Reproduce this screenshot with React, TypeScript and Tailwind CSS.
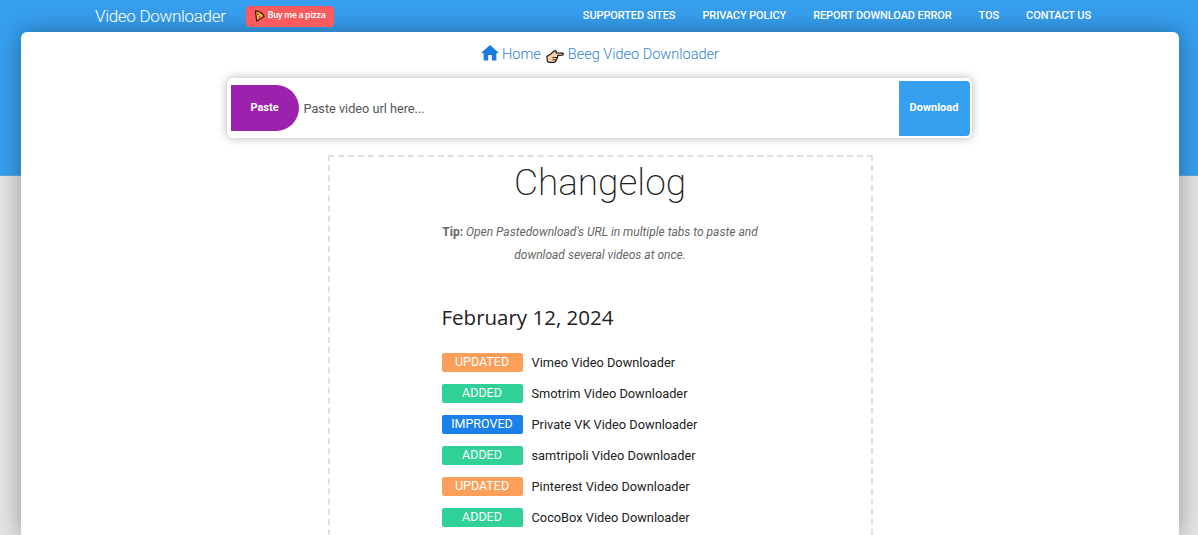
const rows = [
  { tag: "UPDATED", color: "bg-[#fb9f5a]", name: "Vimeo Video Downloader" },
  { tag: "ADDED", color: "bg-[#30d196]", name: "Smotrim Video Downloader" },
  { tag: "IMPROVED", color: "bg-[#1b80e9]", name: "Private VK Video Downloader" },
  { tag: "ADDED", color: "bg-[#30d196]", name: "samtripoli Video Downloader" },
  { tag: "UPDATED", color: "bg-[#fb9f5a]", name: "Pinterest Video Downloader" },
  { tag: "ADDED", color: "bg-[#30d196]", name: "CocoBox Video Downloader" },
];

const navItems = ["Supported Sites", "Privacy Policy", "Report Download Error", "TOS", "Contact Us"];

function Pizza() {
  return (
    <svg width="11" height="12" viewBox="0 0 12 13" className="shrink-0">
      <path d="M1.5 1 C6 1.5 10 4 11 7 L3 12 Z" fill="#f9b24a" stroke="#3a1a10" strokeWidth="1.4" strokeLinejoin="round" />
      <circle cx="4.5" cy="4.5" r="1" fill="#c0321e" />
      <circle cx="6" cy="7.5" r="1" fill="#c0321e" />
    </svg>
  );
}

function HomeIcon() {
  return (
    <svg width="18" height="16" viewBox="0 0 18 16" className="shrink-0">
      <path d="M9 0 L18 8 H15.4 V15.5 H10.8 V10 H7.2 V15.5 H2.6 V8 H0 Z" fill="#1a7be0" />
    </svg>
  );
}

function Hand() {
  return (
    <svg width="18" height="13" viewBox="0 0 18 13" className="shrink-0">
      <path
        d="M0.8 6.5 L4 4.6 L7.8 1.2 C8.6 0.6 9.8 0.7 10.4 1.3 L10 2.8 L16.6 3.1 C17.6 3.3 17.6 4.9 16.6 5.1 L11.8 5.3 L11.6 7.5 L10.6 9.6 L9.6 11.2 C9.2 12 8.4 12.4 7.4 12.4 L3.4 12.4 C2.4 12.4 1.8 12 1.4 11 Z"
        fill="#f8d2ad"
        stroke="#241410"
        strokeWidth="1.2"
        strokeLinejoin="round"
      />
      <path d="M6.5 7.5 H11.4 M6.5 9.8 H10.4" stroke="#241410" strokeWidth="0.9" fill="none" />
    </svg>
  );
}

export default function App() {
  return (
    <div className="relative h-[535px] overflow-hidden bg-[#e4e4e4] font-['Roboto',sans-serif]">
      <div className="absolute inset-x-0 top-0 h-[176px] border-b border-[#5aa9e8] bg-[#379fef]" />
      <div className="relative">
        <header className="flex h-8 items-center pl-[95px] pr-[107px] text-white">
          <span className="text-[17px] font-light leading-none tracking-[-0.3px]">Video Downloader</span>
          <span className="ml-5 flex h-[21px] w-[88px] items-center justify-center gap-[3px] rounded bg-[#fb5b5f] text-[9px] font-medium tracking-[-0.2px]">
            <Pizza />
            Buy me a pizza
          </span>
          <nav className="ml-auto flex gap-[27px] text-[11px] font-medium uppercase tracking-[-0.1px]">
            {navItems.map((item) => (
              <span key={item}>{item}</span>
            ))}
          </nav>
        </header>

        <main className="ml-[21px] mr-[19px] flex h-[503px] flex-col items-center overflow-hidden rounded-t-md bg-white shadow-[0_0_24px_rgba(0,0,0,0.35)]">
          <div className="mt-3 flex h-[20px] items-center gap-[3px] text-[14.5px] font-light text-[#2f7fd8]">
            <span className="-mt-[3px]"><HomeIcon /></span>
            <span className="mt-[2px]">Home</span>
            <span className="ml-[2px] mt-[5px]"><Hand /></span>
            <span className="ml-[1px] mt-[2px]">Beeg Video Downloader</span>
          </div>

          <div className="mt-[14px] mr-[2px] flex h-[60px] w-[745px] items-center rounded-md bg-white pl-1 pr-[2px] shadow-[0_0_10px_rgba(0,0,0,0.3)]">
            <button className="h-[46px] w-[68px] rounded-r-[24px] bg-[#9c22ad] pt-px text-[11px] font-bold text-white">
              Paste
            </button>
            <span className="ml-[5px] flex-1 pt-[2px] text-[12.7px] text-[#555]">Paste video url here...</span>
            <button className="h-[55px] w-[71px] rounded-r bg-[#379fef] pt-px text-[11px] font-bold text-white">
              Download
            </button>
          </div>

          <section className="mt-[17px] w-[545px] flex-1 border-2 border-b-0 border-dashed border-[#e0e0e0] pl-[112px]">
            <div className="-ml-[112px] text-center">
              <h1 className="mt-[1px] text-[37px] font-extralight leading-[50px] text-[#222]">Changelog</h1>
              <p className="mx-auto mt-[13px] w-[340px] text-[12px] italic leading-[23px] text-[#666]">
                <b className="not-italic font-bold">Tip:</b> Open Pastedownload's URL in multiple tabs to paste and download several videos at once.
              </p>
            </div>
            <h2 className="mt-[35px] font-['Open_Sans',sans-serif] text-[20.5px] leading-[30px] text-[#222]">February 12, 2024</h2>
            <ul className="mt-[21px] flex flex-col gap-[12px]">
              {rows.map((row, i) => (
                <li key={i} className="flex h-[19px] items-center">
                  <span className={`flex h-[19px] w-[81px] items-center justify-center rounded-[2px] text-[12.5px] text-white ${row.color}`}>
                    {row.tag}
                  </span>
                  <span className="ml-[9px] text-[12.8px] text-[#222]">{row.name}</span>
                </li>
              ))}
            </ul>
          </section>
        </main>
      </div>
    </div>
  );
}
